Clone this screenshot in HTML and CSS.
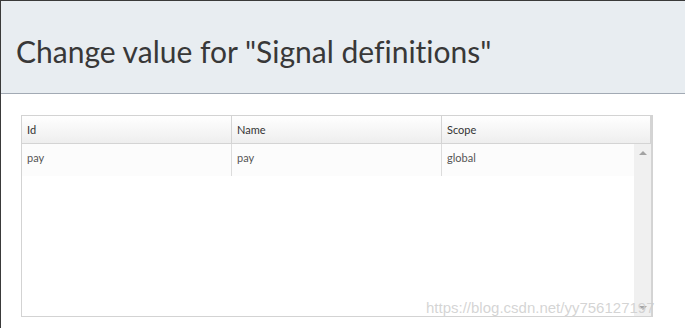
FILE: index.html
```html
<!DOCTYPE html>
<html>
<head>
<meta charset="utf-8">
<link rel="stylesheet" href="styles.css">
</head>
<body>
<div class="dialog">
  <div class="header">
    <h1 class="title">Change value for "Signal definitions"</h1>
  </div>
  <div class="body">
    <div class="grid">
      <div class="grid-head">
        <div class="hcell c1">Id</div>
        <div class="hcell c2">Name</div>
        <div class="hcell c3">Scope</div>
      </div>
      <div class="grid-body">
        <div class="rows">
          <div class="row">
            <div class="cell c1">pay</div>
            <div class="cell c2">pay</div>
            <div class="cell c3">global</div>
          </div>
        </div>
        <div class="scrollbar">
          <span class="arrow up"></span>
          <span class="arrow down"></span>
        </div>
      </div>
    </div>
  </div>
  <div class="watermark">https://blog.csdn.net/yy756127197</div>
</div>
</body>
</html>
```
FILE: styles.css
```css
html, body {
  margin: 0;
  padding: 0;
  background: #ffffff;
}
body {
  font-family: Lato, "Open Sans", sans-serif;
  font-variant-ligatures: none;
  width: 685px;
  height: 328px;
  overflow: hidden;
}
.dialog {
  position: relative;
  height: 328px;
  box-sizing: border-box;
  border-left: 1px solid #3a3a3a;
  border-top: 1px solid #3a3a3a;
}
.header {
  background: #e8edf1;
  height: 93px;
  border-bottom: 1px solid #a2aab4;
  box-sizing: border-box;
  padding: 32px 0 0 15px;
}
.title {
  margin: 0;
  font-weight: 400;
  font-size: 30px;
  line-height: 36px;
  color: #383838;
  letter-spacing: 0;
}
.body {
  padding: 21px 0 0 20px;
}
.grid {
  width: 632px;
  height: 202px;
  border: 1px solid #d3d3d3;
  box-sizing: border-box;
  display: flex;
  flex-direction: column;
}
.grid-head {
  display: flex;
  height: 28px;
  border-bottom: 1px solid #d4d4d4;
  background: linear-gradient(#ffffff, #eeeeee);
  box-sizing: border-box;
  flex: none;
}
.hcell {
  font-size: 11px;
  color: #333333;
  line-height: 27px;
  padding-left: 5px;
  box-sizing: border-box;
  border-right: 1px solid #d4d4d4;
}
.c1 { width: 210px; }
.c2 { width: 210px; }
.c3 { flex: 1; }
.grid-head .c3 { border-right: 2px solid #d4d4d4; }
.grid-body {
  flex: 1;
  display: flex;
}
.rows {
  flex: 1;
}
.row {
  display: flex;
  height: 32px;
  background: #fcfcfc;
}
.cell {
  font-size: 11px;
  color: #555555;
  line-height: 28px;
  padding-left: 5px;
  box-sizing: border-box;
  border-right: 1px solid #dcdcdc;
}
.row .c3 { border-right: none; }
.scrollbar {
  width: 17px;
  background: #f0f0f0;
  border-right: 1px solid #d4d4d4;
  position: relative;
}
.arrow {
  position: absolute;
  left: 5px;
  width: 0;
  height: 0;
  border-left: 4px solid transparent;
  border-right: 4px solid transparent;
}
.arrow.up {
  top: 7px;
  border-bottom: 4px solid #a3a3a3;
}
.arrow.down {
  bottom: 6px;
  border-top: 4px solid #a3a3a3;
}
.watermark {
  position: absolute;
  left: 425px;
  top: 298px;
  font-family: "Liberation Sans", Arial, sans-serif;
  font-size: 15px;
  color: rgba(205, 205, 205, 0.85);
  white-space: nowrap;
}
```
